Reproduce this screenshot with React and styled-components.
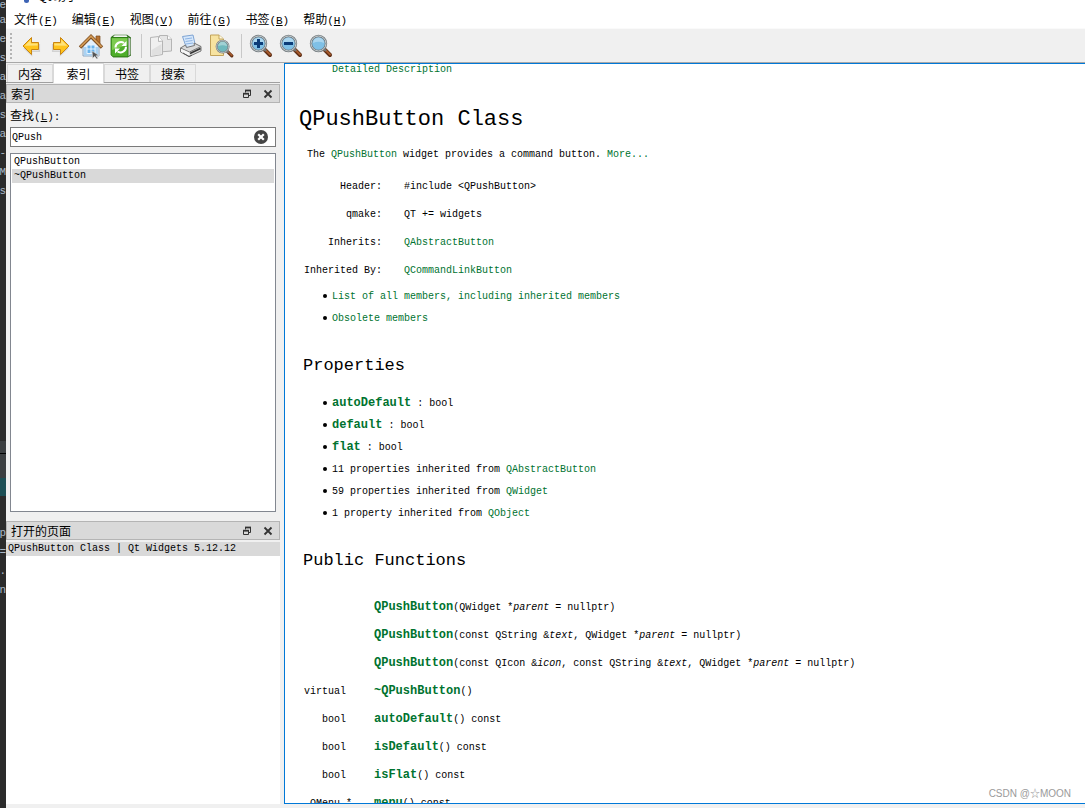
import React, { useState } from "react";
import styled, { createGlobalStyle } from "styled-components";

const GlobalStyle = createGlobalStyle`
  * {
    box-sizing: border-box;
  }

  body {
    margin: 0;
    background: #f0f0f0;
    color: #000;
    font-family: "Liberation Mono", "Noto Sans CJK SC", monospace;
    font-size: 10px;
  }

  button {
    font: inherit;
    color: inherit;
    background: none;
    border: none;
    padding: 0;
  }
`;

const Screen = styled.div`
  display: flex;
  height: 100vh;
  overflow: hidden;
`;

const EditorStrip = styled.div`
  flex: none;
  width: 6px;
  overflow: hidden;
  display: flex;
  flex-direction: column;
  background: #2b2b2b;
  color: #a9b7c6;
  font-size: 11px;
  line-height: 19px;
`;

const CodePane = styled.div`
  height: ${(props) => props.$height}px;
  flex: none;
  overflow: hidden;
  display: flex;
  flex-direction: column;
  justify-content: ${(props) => (props.$end ? "flex-end" : "flex-start")};
  align-items: flex-end;
  white-space: pre;
`;

const CodeLine = styled.div`
  flex: none;
  height: ${(props) => (props.$short ? 11 : 19)}px;
  line-height: ${(props) => (props.$short ? 11 : 19)}px;
`;

const EditorBar = styled.div`
  flex: none;
  height: ${(props) => props.$height}px;
  background: ${(props) => props.$color};
  border-bottom: ${(props) => (props.$line ? "1px solid #000" : "none")};
`;

const Window = styled.div`
  flex: 1;
  min-width: 0;
  display: flex;
  flex-direction: column;
`;

const TitleBar = styled.div`
  flex: none;
  height: 10px;
  overflow: hidden;
  display: flex;
  align-items: flex-start;
  gap: 9px;
  padding-left: 12px;
  background: #fff;
  font-family: "Noto Sans CJK SC", sans-serif;
  font-size: 12px;
  line-height: 14px;

  > * {
    margin-top: -11px;
  }
`;

const AppMark = styled.span`
  width: 5px;
  height: 14px;
  margin-left: 6px;
  border-radius: 0 0 3px 3px;
  background: #3d63b5;
`;

const MenuBar = styled.nav`
  flex: none;
  display: flex;
  height: 18px;
  padding-left: 1px;
  background: #fff;
`;

const MenuButton = styled.button`
  padding: 0 7px;
  font-family: "Noto Sans CJK SC", sans-serif;
  font-size: 12px;
  line-height: 18px;
`;

const Key = styled.span`
  font-family: "Liberation Mono", monospace;
  font-size: 11px;
`;

const Toolbar = styled.div`
  flex: none;
  display: flex;
  align-items: center;
  height: 35px;
  padding-left: 4px;
  border-top: 1px solid #fafafa;
  border-bottom: 1px solid #a8a8a8;
`;

const Grip = styled.div`
  width: 2px;
  height: 26px;
  margin-right: 4px;
  background: repeating-linear-gradient(#b4b4b4 0 2px, transparent 2px 4px);
`;

const ToolButton = styled.button`
  width: 30px;
  height: 30px;
  display: flex;
  align-items: center;
  justify-content: center;
`;

const Divider = styled.div`
  width: 10px;
  height: 24px;
  display: flex;
  justify-content: center;

  &::before {
    content: "";
    width: 1px;
    background: #c8c8c8;
  }
`;

const Workspace = styled.div`
  flex: 1;
  min-height: 0;
  display: flex;
  margin-bottom: 4px;
`;

const Sidebar = styled.aside`
  flex: none;
  width: 274px;
  margin-right: 4px;
  display: flex;
  flex-direction: column;
`;

const Tabs = styled.div`
  flex: none;
  display: flex;
  align-items: flex-end;
  height: 20px;
  padding-left: 1px;
  margin-bottom: 1px;
  border-bottom: 1px solid #a0a0a0;
`;

const Tab = styled.button`
  width: ${(props) => (props.$active ? 51 : 46)}px;
  height: ${(props) => (props.$active ? 20 : 18)}px;
  margin-bottom: ${(props) => (props.$active ? -1 : 0)}px;
  border: 1px solid #d9d9d9;
  border-bottom: none;
  background: ${(props) => (props.$active ? "#fff" : "#f0f0f0")};
  font-family: "Noto Sans CJK SC", sans-serif;
  font-size: 12px;
  line-height: 17px;
`;

const Dock = styled.section`
  flex: ${(props) => props.$grow} 1 0;
  min-height: 0;
  display: flex;
  flex-direction: column;
`;

const DockTitle = styled.header`
  flex: none;
  display: flex;
  align-items: center;
  gap: 9px;
  height: 19px;
  padding: 0 5px 0 4px;
  border: 1px solid #b4b4b4;
  background: #d9d9d9;
`;

const DockName = styled.h4`
  flex: 1;
  margin: 0;
  font-family: "Noto Sans CJK SC", sans-serif;
  font-size: 12px;
  font-weight: normal;
  line-height: 17px;
`;

const DockButton = styled.button`
  width: 12px;
  height: 12px;
  display: flex;
  align-items: center;
  justify-content: center;

  svg {
    flex: none;
  }
`;

const DockBody = styled.div`
  flex: 1;
  min-height: 0;
  display: flex;
  flex-direction: column;
  padding: 0 4px 9px;
`;

const SearchLabel = styled.label`
  height: 24px;
  font-family: "Noto Sans CJK SC", sans-serif;
  font-size: 12px;
  line-height: 24px;
`;

const SearchBox = styled.div`
  flex: none;
  display: flex;
  align-items: center;
  height: 20px;
  padding-right: 8px;
  margin-bottom: 6px;
  border: 1px solid #7a7a7a;
  background: #fff;
`;

const SearchInput = styled.input`
  flex: 1;
  min-width: 0;
  border: none;
  outline: none;
  padding: 0 1px;
  background: none;
  font: inherit;
`;

const List = styled.ul`
  flex: 1;
  margin: 0;
  padding: 1px;
  border: 1px solid #828790;
  background: #fff;
  list-style: none;
`;

const ListItem = styled.li`
  height: 14px;
  padding: 0 2px;
  line-height: 14px;
  background: ${(props) => (props.$selected ? "#d9d9d9" : "transparent")};
`;

const OpenPages = styled.ul`
  flex: 1;
  margin: 2px 0 0;
  padding: 0;
  background: #fff;
  list-style: none;
`;

const Viewer = styled.main`
  flex: 1;
  min-width: 0;
  position: relative;
  overflow: hidden;
  border: 1px solid #0078d7;
  border-right: none;
  background: #fff;
`;

const DocLink = styled.a`
  color: #00732f;
  font-size: ${(props) => (props.$bold ? 12 : 10)}px;
  font-weight: ${(props) => (props.$bold ? "bold" : "normal")};
  text-decoration: none;
`;

const Contents = styled.div`
  padding: 1px 0 0 47px;
  line-height: 10px;
`;

const Title = styled.h1`
  margin: 31px 0 0 14px;
  font-size: 22px;
  font-weight: normal;
  line-height: 28px;
`;

const Heading = styled.h2`
  margin: 26px 0 0 18px;
  font-size: 17px;
  font-weight: normal;
  line-height: 22px;
`;

const Brief = styled.p`
  margin: 14px 0 0 22px;
  line-height: 14px;
`;

const DocTable = styled.table`
  margin: ${(props) => props.$top}px 0 0 19px;
  border-collapse: collapse;
  white-space: pre;

  th,
  td {
    height: 28px;
    padding: 7px 0 5px;
    font-weight: normal;
    line-height: 14px;
    vertical-align: baseline;
  }

  th {
    padding-right: 22px;
    text-align: right;
  }
`;

const DocList = styled.ul`
  margin: ${(props) => props.$top}px 0 0;
  padding: 0 0 0 37px;
  list-style: none;
`;

const DocItem = styled.li`
  display: flex;
  align-items: center;
  height: 22px;
  white-space: pre;

  &::before {
    content: "";
    width: 4px;
    height: 4px;
    margin: 0 5px 0 1px;
    border-radius: 2px;
    background: #000;
  }
`;

const Watermark = styled.div`
  position: absolute;
  right: 14px;
  bottom: 1px;
  color: #9a9a9a;
  font-family: "Liberation Sans", "Noto Sans CJK SC", sans-serif;
  font-size: 10px;
  line-height: 16px;
`;

const ArrowIcon = ({ right }) => (
  <svg width="24" height="24" viewBox="0 0 24 24">
    <g transform={right ? "matrix(-1 0 0 1 24 0)" : undefined}>
      <path d="M5 14 12.5 21V17.2H20.3V10" fill="none" stroke="#d2d2d2" strokeWidth="1.5" />
      <path
        d="M4 12 12.5 3.5V8.5H19.5V15.5H12.5V20.5Z"
        fill="#ffc41c"
        stroke="#c98512"
        strokeLinejoin="round"
      />
      <path d="M5.8 11.8 11.8 5.8V9.4H18.7V11.5Z" fill="#ffe27a" />
    </g>
  </svg>
);

const HomeIcon = () => (
  <svg width="26" height="26" viewBox="0 0 26 26">
    <path d="M18 3h4v8h-4z" fill="#b97332" stroke="#7a4a1e" strokeWidth=".7" />
    <path d="M5 12 13 4.5 21 12V23H5Z" fill="#e4f0fb" stroke="#8ba6c1" />
    <path d="M6 14H20V22.5H6Z" fill="#a9d2f3" />
    <path d="M9 12h8v8.500H9z" fill="#6ab4ec" stroke="#e8f4ff" />
    <path d="M13 12v8.500M9 16h8" stroke="#e8f4ff" />
    <path d="m2 14.5 11-11 11 11" fill="none" stroke="#7c4d20" strokeWidth="3.4" />
    <path d="m2.4 13.8 10.6-10.6 10.6 10.6" fill="none" stroke="#d39a55" strokeWidth="1.8" />
    <path d="m14 18 7 4.500-3 .3 2 2.500-1.300.7-2-2.700-2 2Z" fill="#555" stroke="#ddd" strokeWidth=".6" />
  </svg>
);

const SyncIcon = () => (
  <svg width="24" height="24" viewBox="0 0 24 24">
    <path d="M2 3 5 .8H18L22 3.5V21.5L19 23.3H4Z" fill="#2e6f1b" />
    <path d="M4 2 6 1.2H17.5L18.5 3H5Z" fill="#f4f4f4" />
    <path d="M19 3.5 21.5 4.5V20.5L19 22.5Z" fill="#c8c8c8" />
    <path d="M2 3.5H19V22.8H4L2 21Z" fill="#4fae2b" stroke="#2e7a17" strokeWidth=".8" />
    <path d="M3 4.2H18.3V11L3 16Z" fill="#7dcb50" />
    <path d="M6.5 13.500A5.500 5.500 0 0 1 15 9M17 12.800A5.500 5.500 0 0 1 8.500 17.500" fill="none" stroke="#fff" strokeWidth="2" />
    <path d="M17.500 7V12H12.500ZM6 19.500V14.500h5Z" fill="#fff" />
  </svg>
);

const CopyIcon = () => (
  <svg width="24" height="24" viewBox="0 0 24 24" stroke="#b5b5b5" strokeLinejoin="round">
    <path d="M10.5 1.5H18.5L22.5 5V17L10.5 18Z" fill="#e6e6e6" />
    <path d="M18.5 1.5V5.500l4-.5" fill="#fff" />
    <path d="M1.5 3.5 9.500 2.500 13.500 7V20.500L1.500 22.500Z" fill="#f0f0f0" />
    <path d="M9.5 2.500V7.500l4-.5" fill="#fff" />
    <path d="M2.500 16 12.500 10V20L2.500 21.500Z" fill="#e0e0e0" stroke="none" />
  </svg>
);

const PrintIcon = () => (
  <svg width="24" height="24" viewBox="0 0 24 24" strokeLinejoin="round">
    <path d="M3.5 2.5 14 1 16.5 12 7.5 14Z" fill="#d5e7fb" stroke="#7fa4d3" />
    <path d="m6 5 7-1M6.5 7.5l7-1M7 10l7-1" stroke="#8db3e3" />
    <path d="m1.5 14 5-3 1 2.5 8-2-.5-2.5 7 3.5V17l-12 5.5-8.500-4.500Z" fill="#dadada" stroke="#777" />
    <path d="m1.500 14 9 4 11.500-5.500" fill="none" stroke="#777" />
    <path d="m2 14.700 8.500 4v3L2 17.700Z" fill="#f6f6f6" />
    <path d="m11 19.500 10.500-5" stroke="#333" strokeWidth="1.600" />
    <path d="m4 19 6 3.500 3-1.300" fill="none" stroke="#555" />
  </svg>
);

const Lens = ({ children, fill = "#7fc0e6" }) => (
  <g>
    <path d="m16 16 5 5" stroke="#5d2c12" strokeWidth="4" strokeLinecap="round" />
    <path d="m16.500 16 4.500 4.500" stroke="#a65a2c" strokeWidth="2" strokeLinecap="round" />
    <path d="m14.500 14.500 2.500 2.500" stroke="#777" strokeWidth="2.400" />
    <circle cx="9.500" cy="9.500" r="7.500" fill={fill} stroke="#727a7e" strokeWidth="2.400" />
    <circle cx="9.500" cy="9.500" r="7.500" fill="none" stroke="#c9cfd1" strokeWidth="1" />
    <path d="M4 9A5.500 5.500 0 0 1 15 9Q9.500 6.500 4 9Z" fill="#fff" opacity=".35" />
    {children}
  </g>
);

const FindIcon = () => (
  <svg width="26" height="26" viewBox="0 0 26 26">
    <path d="M2.500 2H11L15.500 6V22.500H2.500Z" fill="#f7e3a0" stroke="#c2a35a" />
    <path d="M11 2V6h4.500" fill="#fffbe6" stroke="#c2a35a" />
    <g transform="translate(7 6) scale(.8)">
      <Lens fill="#6fb9bd" />
    </g>
  </svg>
);

const ZoomIcon = ({ mode }) => (
  <svg width="24" height="24" viewBox="0 0 24 24">
    <Lens>
      {mode !== "reset" && <path d="M5 9.500h9" stroke="#0b3c78" strokeWidth="3" />}
      {mode === "in" && <path d="M9.500 5v9" stroke="#0b3c78" strokeWidth="3" />}
    </Lens>
  </svg>
);

const FloatIcon = () => (
  <svg width="10" height="10" viewBox="0 0 10 10" fill="none" stroke="#333">
    <path d="M3.500 3.500V1.500H8.500V6.500H7" />
    <path d="M3 1.500H9" strokeWidth="1.800" />
    <path d="M1.500 4.500H6.500V8.500H1.500Z" />
    <path d="M1 4.700H7" strokeWidth="1.800" />
  </svg>
);

const CloseIcon = () => (
  <svg width="10" height="10" viewBox="0 0 10 10">
    <path d="m1.500 1.500 7 7m0-7-7 7" stroke="#333" strokeWidth="1.800" />
  </svg>
);

const ClearIcon = () => (
  <svg width="16" height="16" viewBox="0 0 16 16">
    <circle cx="8" cy="8" r="7" fill="#444" />
    <path d="m5.200 5.200 5.600 5.600m0-5.600-5.600 5.600" stroke="#fff" strokeWidth="2.200" />
  </svg>
);

const menus = [
  ["文件", "F"],
  ["编辑", "E"],
  ["视图", "V"],
  ["前往", "G"],
  ["书签", "B"],
  ["帮助", "H"],
];

const toolGroups = [
  [
    ["后退", <ArrowIcon />],
    ["前进", <ArrowIcon right />],
    ["主页", <HomeIcon />],
    ["同步", <SyncIcon />],
  ],
  [
    ["复制", <CopyIcon />],
    ["打印", <PrintIcon />],
    ["查找", <FindIcon />],
  ],
  [
    ["放大", <ZoomIcon mode="in" />],
    ["缩小", <ZoomIcon mode="out" />],
    ["重置", <ZoomIcon mode="reset" />],
  ],
];

const tabs = ["内容", "索引", "书签", "搜索"];

const properties = ["autoDefault", "default", "flat"];

const inherited = [
  ["11 properties", "QAbstractButton"],
  ["59 properties", "QWidget"],
  ["1 property", "QObject"],
];

const functions = [
  ["", "QPushButton", <>(QWidget *<i>parent</i> = nullptr)</>],
  ["", "QPushButton", <>(const QString &amp;<i>text</i>, QWidget *<i>parent</i> = nullptr)</>],
  [
    "",
    "QPushButton",
    <>(const QIcon &amp;<i>icon</i>, const QString &amp;<i>text</i>, QWidget *<i>parent</i> = nullptr)</>,
  ],
  ["virtual ", "~QPushButton", "()"],
  ["bool ", "autoDefault", "() const"],
  ["bool ", "isDefault", "() const"],
  ["bool ", "isFlat", "() const"],
  ["QMenu *", "menu", "() const"],
];

const Link = ({ children, bold }) => (
  <DocLink href="#" $bold={bold}>
    {children}
  </DocLink>
);

const DockHeader = ({ title }) => (
  <DockTitle>
    <DockName>{title}</DockName>
    <DockButton aria-label="浮动">
      <FloatIcon />
    </DockButton>
    <DockButton aria-label="关闭">
      <CloseIcon />
    </DockButton>
  </DockTitle>
);

const Editor = () => (
  <EditorStrip aria-hidden="true">
    <CodePane $height={201} $end>
      {["e", "a", "ce", "as", "a", "a", "s", "a", "-", "M", "as"].map((text, i) => (
        <CodeLine key={i} $short={i === 0}>
          {text}
        </CodeLine>
      ))}
    </CodePane>
    <CodePane $height={240} />
    <EditorBar $height={13} $color="#3c3f41" $line />
    <EditorBar $height={24} $color="#3c3f41" />
    <EditorBar $height={18} $color="#1d4f55" />
    <CodePane $height={104} $end>
      {["p", "=", "n.", "n"].map((text, i) => (
        <CodeLine key={i}>{text}</CodeLine>
      ))}
    </CodePane>
  </EditorStrip>
);

const App = () => {
  const [query, setQuery] = useState("QPush");
  const [tab, setTab] = useState("索引");

  return (
    <Screen>
      <GlobalStyle />
      <Editor />
      <Window>
        <TitleBar>
          <AppMark />
          <span>Qt 助手</span>
        </TitleBar>
        <MenuBar>
          {menus.map(([name, key]) => (
            <MenuButton key={key}>
              {name}
              <Key>
                (<u>{key}</u>)
              </Key>
            </MenuButton>
          ))}
        </MenuBar>
        <Toolbar>
          <Grip />
          {toolGroups.map((group, i) => (
            <React.Fragment key={i}>
              {i > 0 && <Divider />}
              {group.map(([label, icon]) => (
                <ToolButton key={label} aria-label={label}>
                  {icon}
                </ToolButton>
              ))}
            </React.Fragment>
          ))}
        </Toolbar>
        <Workspace>
          <Sidebar>
            <Tabs>
              {tabs.map((name) => (
                <Tab key={name} $active={name === tab} onClick={() => setTab(name)}>
                  {name}
                </Tab>
              ))}
            </Tabs>
            <Dock $grow={437}>
              <DockHeader title="索引" />
              <DockBody>
                <SearchLabel htmlFor="search">
                  查找
                  <Key>
                    (<u>L</u>):
                  </Key>
                </SearchLabel>
                <SearchBox>
                  <SearchInput id="search" value={query} onChange={(e) => setQuery(e.target.value)} />
                  <DockButton aria-label="清除" onClick={() => setQuery("")}>
                    <ClearIcon />
                  </DockButton>
                </SearchBox>
                <List>
                  <ListItem>QPushButton</ListItem>
                  <ListItem $selected>~QPushButton</ListItem>
                </List>
              </DockBody>
            </Dock>
            <Dock $grow={283}>
              <DockHeader title="打开的页面" />
              <OpenPages>
                <ListItem $selected>QPushButton Class | Qt Widgets 5.12.12</ListItem>
              </OpenPages>
            </Dock>
          </Sidebar>
          <Viewer>
            <Contents>
              <Link>Detailed Description</Link>
            </Contents>
            <Title>QPushButton Class</Title>
            <Brief>
              The <Link>QPushButton</Link> widget provides a command button. <Link>More...</Link>
            </Brief>
            <DocTable $top={11}>
              <tbody>
                <tr>
                  <th>Header:</th>
                  <td>#include &lt;QPushButton&gt;</td>
                </tr>
                <tr>
                  <th>qmake:</th>
                  <td>QT += widgets</td>
                </tr>
                <tr>
                  <th>Inherits:</th>
                  <td>
                    <Link>QAbstractButton</Link>
                  </td>
                </tr>
                <tr>
                  <th>Inherited By:</th>
                  <td>
                    <Link>QCommandLinkButton</Link>
                  </td>
                </tr>
              </tbody>
            </DocTable>
            <DocList $top={0}>
              <DocItem>
                <Link>List of all members, including inherited members</Link>
              </DocItem>
              <DocItem>
                <Link>Obsolete members</Link>
              </DocItem>
            </DocList>
            <Heading>Properties</Heading>
            <DocList $top={15}>
              {properties.map((name) => (
                <DocItem key={name}>
                  <Link bold>{name}</Link>
                  <span> : bool</span>
                </DocItem>
              ))}
              {inherited.map(([count, name]) => (
                <DocItem key={name}>
                  <span>{count} inherited from </span>
                  <Link>{name}</Link>
                </DocItem>
              ))}
            </DocList>
            <Heading>Public Functions</Heading>
            <DocTable $top={21}>
              <tbody>
                {functions.map(([type, name, args], i) => (
                  <tr key={i}>
                    <th>{type}</th>
                    <td>
                      <Link bold>{name}</Link>
                      {args}
                    </td>
                  </tr>
                ))}
              </tbody>
            </DocTable>
            <Watermark>CSDN @☆MOON</Watermark>
          </Viewer>
        </Workspace>
      </Window>
    </Screen>
  );
};

export default App;
